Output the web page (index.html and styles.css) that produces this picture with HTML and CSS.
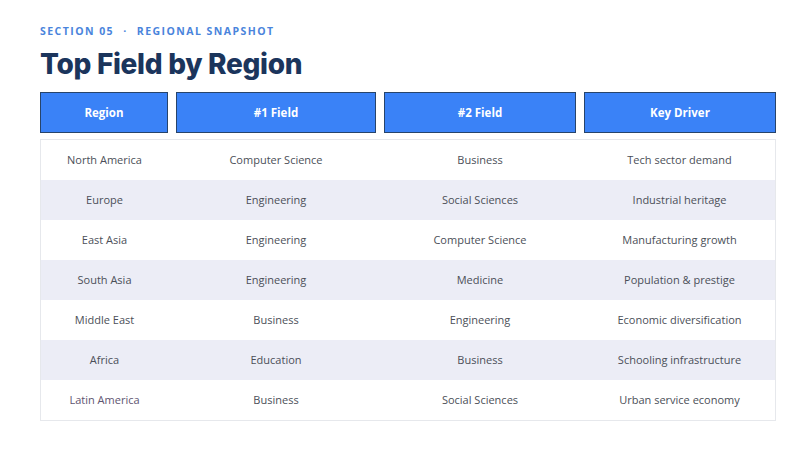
FILE: index.html
```html
<!DOCTYPE html>
<html>
<head>
<meta charset="utf-8">
<link rel="stylesheet" href="styles.css">
</head>
<body>
<div class="slide">
  <div class="eyebrow">SECTION 05 <span class="dot">·</span> REGIONAL SNAPSHOT</div>
  <h1 class="title">Top Field by Region</h1>
  <div class="head">
    <div class="hcell">Region</div>
    <div class="hcell">#1 Field</div>
    <div class="hcell">#2 Field</div>
    <div class="hcell">Key Driver</div>
  </div>
  <div class="body">
    <div class="row"><div>North America</div><div>Computer Science</div><div>Business</div><div>Tech sector demand</div></div>
    <div class="row alt"><div>Europe</div><div>Engineering</div><div>Social Sciences</div><div>Industrial heritage</div></div>
    <div class="row"><div>East Asia</div><div>Engineering</div><div>Computer Science</div><div>Manufacturing growth</div></div>
    <div class="row alt"><div>South Asia</div><div>Engineering</div><div>Medicine</div><div>Population &amp; prestige</div></div>
    <div class="row"><div>Middle East</div><div>Business</div><div>Engineering</div><div>Economic diversification</div></div>
    <div class="row alt"><div>Africa</div><div>Education</div><div>Business</div><div>Schooling infrastructure</div></div>
    <div class="row"><div class="muted">Latin America</div><div>Business</div><div>Social Sciences</div><div>Urban service economy</div></div>
  </div>
</div>
</body>
</html>
```
FILE: styles.css
```css
html, body {
  margin: 0;
  padding: 0;
  background: #ffffff;
}
.slide {
  width: 800px;
  height: 450px;
  box-sizing: border-box;
  padding: 24px 24px 0 40px;
  font-family: "Open Sans", "Liberation Sans", sans-serif;
}
.eyebrow {
  font-family: "Open Sans", sans-serif;
  font-size: 10.5px;
  font-weight: 700;
  letter-spacing: 1.45px;
  color: #4a84dc;
  line-height: 14px;
}
.eyebrow .dot {
  margin: 0 5px;
}
.title {
  margin: 8px 0 0 0;
  font-family: "Inter", "DejaVu Sans", sans-serif;
  font-weight: 800;
  font-size: 28px;
  line-height: 36px;
  color: #1b355c;
  letter-spacing: -0.3px;
}
.head, .row {
  display: grid;
  grid-template-columns: 128px 200px 192px 192px;
  column-gap: 8px;
  width: 736px;
}
.head {
  margin-top: 10px;
}
.hcell {
  height: 41px;
  box-sizing: border-box;
  background: #3a82f7;
  border: 1px solid #27446b;
  color: #ffffff;
  font-weight: 700;
  font-size: 11.5px;
  display: flex;
  align-items: center;
  justify-content: center;
}
.body {
  margin-top: 6px;
  width: 736px;
  box-sizing: border-box;
  border: 1px solid #e6e8ec;
}
.row {
  width: 734px;
  height: 40px;
  grid-template-columns: 127px 200px 192px 191px;
  font-size: 11px;
  color: #4b4f58;
}
.row > div {
  display: flex;
  align-items: center;
  justify-content: center;
  padding-bottom: 1px;
}
.row.alt {
  background: #ecedf6;
}
.muted {
  color: #5e5470;
}
```
